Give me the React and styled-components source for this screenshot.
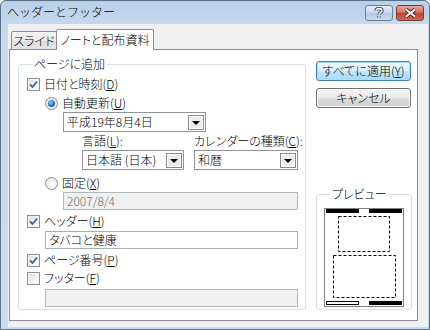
import styled, { createGlobalStyle } from "styled-components";

const GlobalStyle = createGlobalStyle`
  html, body {
    margin: 0;
    padding: 0;
    background: #ffffff;
  }
  body {
    font-family: "Noto Sans CJK JP", "Liberation Sans", sans-serif;
    font-size: 12px;
    font-weight: 300;
    font-feature-settings: "palt";
    color: #000;
  }
`;

// ウィンドウ枠
const Window = styled.div`
  width: 430px;
  height: 330px;
  box-sizing: border-box;
  display: flex;
  flex-direction: column;
  border: 1px solid #5d7087;
  border-radius: 6px 6px 0 0;
  padding: 0 1px 2px 7px;
  background: linear-gradient(#b9d0ea, #c6d9ee 26px, #c9dbef);
`;

const TitleBar = styled.div`
  height: 23px;
  display: flex;
  align-items: flex-start;
`;

const TitleText = styled.div`
  flex: 1;
  margin-left: -1px;
  padding-top: 4px;
  font-size: 12px;
  font-feature-settings: normal;
  line-height: 14px;
`;

const CaptionButton = styled.div`
  width: 28px;
  height: 16px;
  margin-top: 4px;
  box-sizing: border-box;
  border: 1px solid ${(p) => (p.close ? "#7c3a33" : "#6d7c90")};
  border-radius: 3px;
  display: flex;
  align-items: center;
  justify-content: center;
  background: ${(p) =>
    p.close
      ? "linear-gradient(#e4a89e, #d2735f 45%, #c2402f 55%, #cf6a4f)"
      : "linear-gradient(#e3edf8, #c9d9ec 45%, #b4c9e3 55%, #c8dbef)"};
  & + & {
    margin-left: 3px;
  }
  &:last-child {
    margin-right: 4px;
  }
`;

const Client = styled.div`
  flex: 1;
  display: flex;
  flex-direction: column;
  background: #f0f0f0;
  padding: 5px 0 0 1px;
`;

const TabStrip = styled.div`
  height: 21px;
  display: flex;
  align-items: flex-end;
  padding-left: 2px;
  margin-bottom: -1px;
  position: relative;
  z-index: 1;
`;

// 選択中のタブは少し高く、パネルの上線を隠す
const Tab = styled.div`
  box-sizing: border-box;
  width: ${(p) => p.width}px;
  height: ${(p) => (p.active ? "21px" : "18px")};
  margin-bottom: ${(p) => (p.active ? "0" : "1px")};
  margin-left: ${(p) => (p.active ? "-1px" : "0")};
  padding-top: ${(p) => (p.active ? "2px" : "1px")};
  border: 1px solid #898c95;
  border-bottom: none;
  border-radius: 2px 2px 0 0;
  background: ${(p) =>
    p.active ? "#ffffff" : "linear-gradient(#f3f3f3, #ebebeb 50%, #dedede 51%, #e4e4e4)"};
  line-height: 15px;
  text-align: center;
  white-space: nowrap;
`;

const Panel = styled.div`
  flex: 1;
  display: flex;
  gap: 10px;
  margin: 0 10px 6px 0;
  padding: 7px 0 10px 8px;
  border: 1px solid #898c95;
  background: #ffffff;
`;

const GroupBox = styled.fieldset`
  margin: 0;
  padding: 0 0 0 8px;
  min-width: 0;
  width: ${(p) => p.width}px;
  box-sizing: border-box;
  border: 1px solid #d5dfe5;
  border-radius: 3px;
  display: flex;
  flex-direction: column;
`;

const Legend = styled.legend`
  margin-left: ${(p) => p.offset || 0}px;
  padding: 0 2px;
  line-height: 14px;
`;

const Row = styled.div`
  display: flex;
  align-items: center;
  height: 16px;
  margin-top: ${(p) => p.mt || 0}px;
  margin-left: ${(p) => p.ml || 0}px;
  gap: 4px;
  line-height: 16px;
`;

const Box = styled.span`
  width: 13px;
  height: 13px;
  box-sizing: border-box;
  border: 1px solid #8e8f8f;
  background: linear-gradient(135deg, #dcdcdc, #f6f6f6 70%, #ffffff);
  box-shadow: inset 0 0 0 1px #f4f4f4;
  display: flex;
  align-items: center;
  justify-content: center;
  flex: none;
`;

const Radio = styled.span`
  width: 13px;
  height: 13px;
  box-sizing: border-box;
  border-radius: 50%;
  border: 1px solid #8e8f8f;
  background: radial-gradient(circle at 60% 60%, #ffffff, #dedede);
  display: flex;
  align-items: center;
  justify-content: center;
  flex: none;
  &::after {
    content: "";
    display: ${(p) => (p.checked ? "block" : "none")};
    width: 7px;
    height: 7px;
    border-radius: 50%;
    background: radial-gradient(circle at 40% 35%, #8ed0ff, #1f6fc4 55%, #0d3f8a);
  }
`;

const Combo = styled.div`
  box-sizing: border-box;
  width: ${(p) => p.width}px;
  height: 20px;
  margin-top: ${(p) => p.mt || 0}px;
  margin-left: ${(p) => p.ml || 0}px;
  border: 1px solid #8f9298;
  background: #ffffff;
  display: flex;
  align-items: center;
  padding: 0 1px 0 3px;
  line-height: 16px;
`;

const ComboText = styled.span`
  flex: 1;
  white-space: nowrap;
`;

const DropButton = styled.span`
  width: 16px;
  height: 15px;
  box-sizing: border-box;
  border: 1px solid #8a8a8a;
  box-shadow: inset 0 0 0 1px #ffffff;
  background: #ececec;
  display: flex;
  align-items: center;
  justify-content: center;
  &::after {
    content: "";
    border-left: 4px solid transparent;
    border-right: 4px solid transparent;
    border-top: 4px solid #000;
    margin-top: 2px;
  }
`;

const LabelRow = styled.div`
  display: flex;
  gap: 10px;
  margin-top: ${(p) => p.mt || 0}px;
  margin-left: ${(p) => p.ml || 0}px;
`;

const LabelCol = styled.div`
  display: flex;
  flex-direction: column;
  gap: 2px;
  line-height: 14px;
  white-space: nowrap;
`;

const TextBox = styled.div`
  box-sizing: border-box;
  width: ${(p) => p.width}px;
  height: 18px;
  margin-top: ${(p) => p.mt || 0}px;
  margin-left: ${(p) => p.ml || 0}px;
  padding-left: 3px;
  border: 1px solid ${(p) => (p.disabled ? "#b2b8c0" : "#a9adb4")};
  background: ${(p) => (p.disabled ? "#f0f0f0" : "#ffffff")};
  color: ${(p) => (p.disabled ? "#6d6d6d" : "#000")};
  line-height: 16px;
`;

const SideColumn = styled.div`
  width: 96px;
  display: flex;
  flex-direction: column;
`;

const PushButton = styled.div`
  box-sizing: border-box;
  width: 95px;
  height: 20px;
  margin-top: ${(p) => p.mt || 0}px;
  border: 1px solid ${(p) => (p.primary ? "#3c7fb1" : "#707070")};
  border-radius: 3px;
  text-align: center;
  line-height: 18px;
  box-shadow: inset 0 0 0 1px ${(p) => (p.primary ? "#a9e1fb" : "#fbfbfb")};
  background: ${(p) =>
    p.primary
      ? "linear-gradient(#eaf6fd, #d9f0fc 50%, #bee6fd 51%, #a7d9f5)"
      : "linear-gradient(#f2f2f2, #ebebeb 50%, #dddddd 51%, #cfcfcf)"};
`;

const PreviewBox = styled(GroupBox)`
  margin-top: auto;
  padding: 7px 0 2px 7px;
`;

const PreviewPage = () => (
  <svg width="80" height="99" viewBox="0 0 80 99">
    <rect x="0.5" y="0.5" width="79" height="98" fill="#fff" stroke="#808080" />
    <rect x="2.5" y="1.5" width="32" height="3" fill="#000" stroke="#000" />
    <rect x="45.5" y="1.5" width="32" height="3" fill="#000" stroke="#000" />
    <rect x="14.5" y="8.5" width="51" height="35" fill="none" stroke="#000" strokeDasharray="3 2" />
    <rect x="9.5" y="47.5" width="62" height="42" fill="none" stroke="#000" strokeDasharray="3 2" />
    <rect x="2.5" y="93.5" width="32" height="3" fill="#fff" stroke="#000" />
    <rect x="45.5" y="93.5" width="32" height="3" fill="#000" stroke="#000" />
  </svg>
);

const Check = () => (
  <svg width="9" height="9" viewBox="0 0 9 9">
    <path d="M1 4.5 L3.5 7 L8 1.5" fill="none" stroke="#4060a8" strokeWidth="1.8" />
  </svg>
);

const HelpGlyph = () => (
  <svg width="10" height="12" viewBox="0 0 10 12">
    <path
      d="M2 3.5 C2 1 8 1 8 3.8 C8 5.6 5 5.8 5 7.5 M5 9.3 V10.8"
      fill="none"
      stroke="#2f3d52"
      strokeWidth="3.4"
    />
    <path
      d="M2 3.5 C2 1 8 1 8 3.8 C8 5.6 5 5.8 5 7.5 M5 9.3 V10.8"
      fill="none"
      stroke="#ffffff"
      strokeWidth="1.6"
    />
  </svg>
);

const CloseGlyph = () => (
  <svg width="13" height="10" viewBox="0 0 13 10">
    <path d="M2 1.5 L11 8.5 M11 1.5 L2 8.5" stroke="#5a1f18" strokeWidth="4" />
    <path d="M2 1.5 L11 8.5 M11 1.5 L2 8.5" stroke="#ffffff" strokeWidth="2.2" />
  </svg>
);

const App = () => {
  return (
    <>
      <GlobalStyle />
      <Window>
        <TitleBar>
          <TitleText>ヘッダーとフッター</TitleText>
          <CaptionButton>
            <HelpGlyph />
          </CaptionButton>
          <CaptionButton close>
            <CloseGlyph />
          </CaptionButton>
        </TitleBar>
        <Client>
          <TabStrip>
            <Tab width={46}>スライド</Tab>
            <Tab active width={98}>
              ノートと配布資料
            </Tab>
          </TabStrip>
          <Panel>
            <GroupBox width={288}>
              <Legend offset={5}>ページに追加</Legend>
              <Row mt={5}>
                <Box>
                  <Check />
                </Box>
                <span>
                  日付と時刻(<u>D</u>)
                </span>
              </Row>
              <Row mt={3} ml={18}>
                <Radio checked />
                <span>
                  自動更新(<u>U</u>)
                </span>
              </Row>
              <Combo width={143} mt={1} ml={36}>
                <ComboText>平成19年8月4日</ComboText>
                <DropButton />
              </Combo>
              <LabelRow mt={2} ml={55}>
                <LabelCol>
                  <span>
                    言語(<u>L</u>):
                  </span>
                  <Combo width={102}>
                    <ComboText>日本語 (日本)</ComboText>
                    <DropButton />
                  </Combo>
                </LabelCol>
                <LabelCol>
                  <span>
                    カレンダーの種類(<u>C</u>):
                  </span>
                  <Combo width={104}>
                    <ComboText>和暦</ComboText>
                    <DropButton />
                  </Combo>
                </LabelCol>
              </LabelRow>
              <Row mt={5} ml={18}>
                <Radio />
                <span>
                  固定(<u>X</u>)
                </span>
              </Row>
              <TextBox disabled width={235} mt={1} ml={36}>
                2007/8/4
              </TextBox>
              <Row mt={3}>
                <Box>
                  <Check />
                </Box>
                <span>
                  ヘッダー(<u>H</u>)
                </span>
              </Row>
              <TextBox width={253} mt={2} ml={18}>
                タバコと健康
              </TextBox>
              <Row mt={3}>
                <Box>
                  <Check />
                </Box>
                <span>
                  ページ番号(<u>P</u>)
                </span>
              </Row>
              <Row mt={2}>
                <Box />
                <span>
                  フッター(<u>F</u>)
                </span>
              </Row>
              <TextBox disabled width={253} mt={3} ml={18} />
            </GroupBox>
            <SideColumn>
              <PushButton primary mt={4}>
                すべてに適用(<u>Y</u>)
              </PushButton>
              <PushButton mt={7}>キャンセル</PushButton>
              <PreviewBox width={96}>
                <Legend offset={6}>プレビュー</Legend>
                <PreviewPage />
              </PreviewBox>
            </SideColumn>
          </Panel>
        </Client>
      </Window>
    </>
  );
};

export default App;
